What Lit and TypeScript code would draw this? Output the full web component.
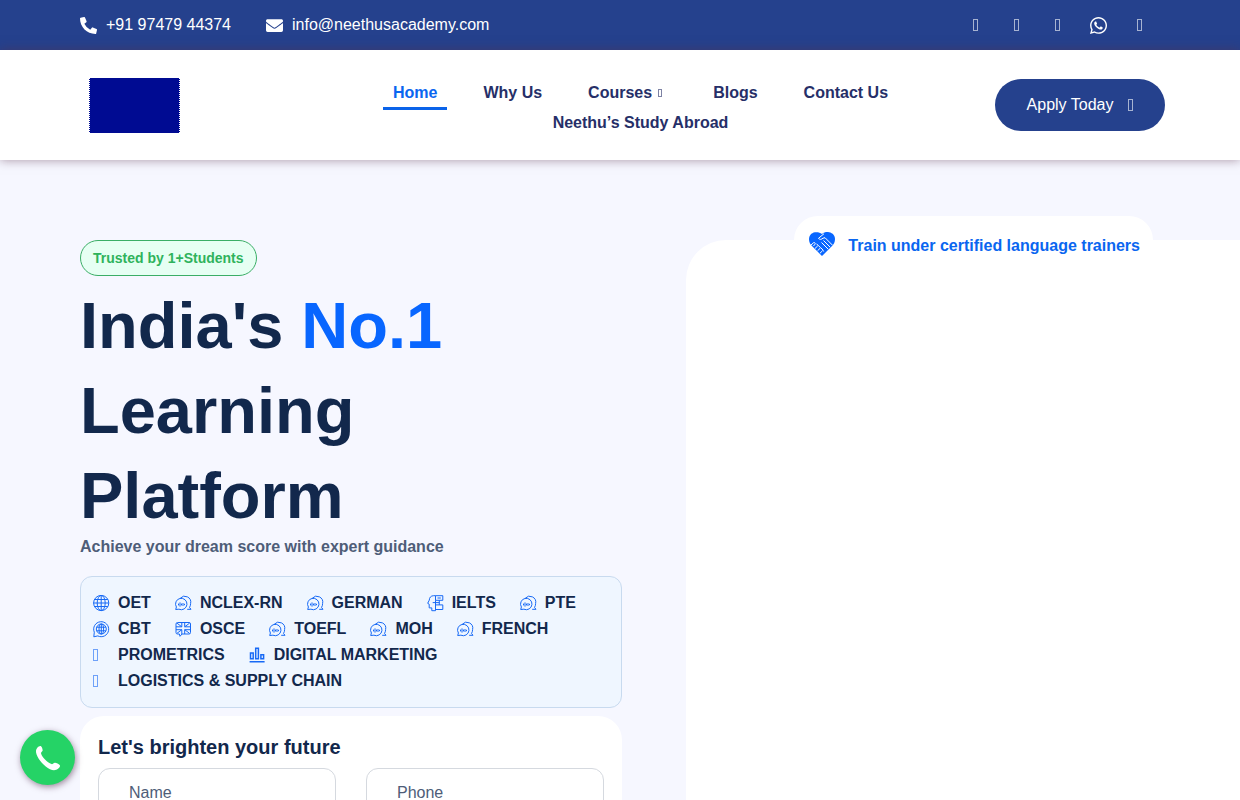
import { LitElement, html, css, svg } from "lit";
import { customElement } from "lit/decorators.js";

const handset = "M497.39 361.8l-112-48a24 24 0 0 0-28 6.9l-49.6 60.6A370.66 370.66 0 0 1 130.6 204.11l60.6-49.6a23.94 23.94 0 0 0 6.9-28l-48-112A24.16 24.16 0 0 0 122.6.61l-104 24A24 24 0 0 0 0 48c0 256.5 207.9 464 464 464a24 24 0 0 0 23.4-18.6l24-104a24.29 24.29 0 0 0-14.01-27.6z";
const envelope = "M502.3 190.8c3.9-3.1 9.7-.2 9.7 4.7V400c0 26.5-21.5 48-48 48H48c-26.5 0-48-21.5-48-48V195.6c0-5 5.7-7.8 9.7-4.7 22.4 17.4 52.1 39.5 154.1 113.6 21.1 15.4 56.7 47.8 92.2 47.6 35.7.3 72-32.8 92.3-47.6 102-74.1 131.6-96.3 154-113.7zM256 320c23.2.4 56.6-29.2 73.4-41.4 132.7-96.3 142.8-104.7 173.4-128.7 5.8-4.5 9.2-11.5 9.2-18.9v-19c0-26.5-21.5-48-48-48H48c-26.5 0-48 21.5-48 48v19c0 7.4 3.4 14.3 9.2 18.9 30.6 23.9 40.7 32.4 173.4 128.7 16.8 12.2 50.2 41.8 73.4 41.4z";
const whatsapp = "M380.9 97.1C339 55.1 283.2 32 223.9 32c-122.4 0-222 99.6-222 222 0 39.1 10.2 77.3 29.6 111L0 480l117.7-30.9c32.4 17.7 68.9 27 106.1 27h.1c122.3 0 224.1-99.6 224.1-222 0-59.3-25.2-115-67.1-157zm-157 341.6c-33.2 0-65.7-8.9-94-25.7l-6.7-4-69.8 18.3L72 359.2l-4.4-7c-18.5-29.4-28.2-63.3-28.2-98.2 0-101.7 82.8-184.5 184.6-184.5 49.3 0 95.6 19.2 130.4 54.1 34.8 34.9 56.2 81.2 56.1 130.5 0 101.8-84.9 184.6-186.6 184.6zm101.2-138.2c-5.5-2.8-32.8-16.2-37.9-18-5.1-1.9-8.8-2.8-12.5 2.8-3.7 5.6-14.3 18-17.6 21.8-3.2 3.7-6.5 4.2-12 1.4-32.6-16.3-54-29.1-75.5-66-5.7-9.8 5.7-9.1 16.3-30.3 1.8-3.7.9-6.9-.5-9.7-1.4-2.8-12.5-30.1-17.1-41.2-4.5-10.8-9.1-9.3-12.5-9.5-3.2-.2-6.9-.2-10.6-.2-3.7 0-9.7 1.4-14.8 6.9-5.1 5.6-19.4 19-19.4 46.3 0 27.3 19.9 53.7 22.6 57.4 2.8 3.7 39.1 59.7 94.8 83.8 35.2 15.2 49 16.5 66.6 13.9 10.7-1.6 32.8-13.4 37.4-26.4 4.6-13 4.6-24.1 3.2-26.4-1.3-2.5-5-3.9-10.5-6.6z";

const globe = svg`<circle cx="8.200" cy="8" r="7.600"/><ellipse cx="8.200" cy="8" rx="4" ry="7.600"/><path d="M8.200.4v15.200M1.600 4.500h13.200M1.600 11.500h13.200M.6 8h15.200"/>`;
const chat = svg`<path d="M5.200 3.300A6 6 0 0 1 15.600 8.500c0 1.600-.4 2.900-1.100 3.900l1.500 1.900h-3.800"/><path d="M.7 14.500l.7-2.500a5.700 5.700 0 1 1 2.500 2.200z"/><path d="M3.500 8.600v1.800M5 7.400v4.200M6.500 8.600v1.800M8 8v3M9.500 8.800v1.400"/>`;
const globeChat = svg`<path d="M.8 15.800l.5-4.600A7.500 7.500 0 1 1 4.800 14.900z"/><circle cx="8.300" cy="8" r="5"/><ellipse cx="8.300" cy="8" rx="2.300" ry="5"/><path d="M8.300 3v10M3.800 6.200h9M3.800 9.800h9"/>`;
const flag = svg`<path d="M2.500 1.500h11.500a1.500 1.500 0 0 1 1.500 1.500v8.500a1.500 1.500 0 0 1-1.500 1.500H7L5 15.300 4.400 13H2.500A1.500 1.500 0 0 1 1 11.500V3a1.500 1.500 0 0 1 1.500-1.500z"/><path d="M6.800 1.500v4.300H1M9.700 1.500v4.300h5.800M6.800 13V8.700H1M9.700 13V8.700h5.800M2 2.200l4.800 3.600M14.500 2.200L9.700 5.800M2 12.300l4.800-3.600M14.500 12.300L9.700 8.700"/>`;
const head = svg`<path d="M8.500.7H6.600C3.800.7 2.300 2.700 2.300 5.100L.7 8.300l1.500.9v3.700h2.600v2.800h3.700"/><path d="M8.500.7h7.300v4.600H8.500zM8.500 9.900h7.300v4.600H8.500zM8.500 5.300v10.400M12.300 5.300v4.600M8.500 7.600h3.800M10.500 3h3.300M5.700 7.600h2.800"/>`;
const bars = svg`<path stroke-width="1.500" d="M1.500 5.900h2.700v5.800H1.500zM6.700 1.200h2.700v10.500H6.700zM11.900 7.700h2.700v4h-2.700zM.6 14.700h15"/>`;

const missing = html`<span class="glyph"></span>`;
const line = (shape: unknown) => html`<svg class="line" viewBox="0 0 17 17" aria-hidden="true">${shape}</svg>`;
const solid = (d: string, box = "0 0 512 512") => html`<svg class="solid" viewBox=${box} aria-hidden="true"><path d=${d} /></svg>`;

const courses: [string, unknown][] = [
  ["OET", line(globe)], ["NCLEX-RN", line(chat)], ["GERMAN", line(chat)], ["IELTS", line(head)], ["PTE", line(chat)],
  ["CBT", line(globeChat)], ["OSCE", line(flag)], ["TOEFL", line(chat)], ["MOH", line(chat)], ["FRENCH", line(chat)],
  ["PROMETRICS", missing], ["DIGITAL MARKETING", line(bars)], ["LOGISTICS & SUPPLY CHAIN", missing],
];

@customElement("app-root")
export class AppRoot extends LitElement {
  static styles = css`
    :host { display: block; min-height: 100vh; font: 16px/24px "Liberation Sans", Arial, sans-serif; color: #12284c; background: #f6f7ff; }
    * { box-sizing: border-box; }
    a { color: inherit; text-decoration: none; }
    svg { display: block; flex: none; }
    .solid { width: 17px; height: 17px; fill: currentColor; }
    .line { width: 17px; height: 17px; fill: none; stroke: #1769f5; stroke-width: 1; }
    .glyph { display: block; width: 5px; height: 12px; border: 1px solid currentColor; opacity: .6; }

    .topbar { display: flex; justify-content: space-between; align-items: center; height: 50px; padding: 0 80px; color: #fff; background: #25418d; }
    .contacts { display: flex; gap: 35px; }
    .contact { display: flex; align-items: center; gap: 9px; }
    .socials { display: flex; }
    .social { display: grid; place-items: center; width: 41px; height: 30px; }

    .header { position: relative; display: grid; grid-template-columns: 236px minmax(0, 1fr) 200px; align-items: start; min-height: 110px; padding: 28px 75px 22px 80px; background: #fff; box-shadow: 0 0 10px rgba(90, 45, 70, .5); }
    .logo { display: block; width: 91px; height: 55px; margin-left: 9px; background: #000b92; border-inline: 1px dotted #fff; }
    .nav { display: flex; flex-wrap: wrap; justify-content: center; column-gap: 26px; font-weight: 700; color: #262f68; }
    .nav a { display: flex; align-items: center; height: 30px; padding: 0 10px; }
    .nav .current { height: 32px; margin-bottom: -2px; padding-top: 1px; border-bottom: 3px solid #0a63e9; color: #0a66f0; }
    .nav .glyph { width: 4px; height: 8px; margin: 0 5px 0 6px; }
    .apply { justify-self: end; display: flex; align-items: center; justify-content: center; gap: 15px; width: 170px; height: 52px; margin-top: 1px; border: 0; border-radius: 26px; font: inherit; color: #fff; background: #25418d; }

    .hero { display: grid; grid-template-columns: minmax(0, 542fr) minmax(0, 554fr); column-gap: 64px; padding: 80px 0 0 80px; }
    .intro { padding-bottom: 40px; }
    .badge { display: inline-flex; align-items: center; height: 36px; padding: 0 12px; border: 1px solid #3aae66; border-radius: 18px; font-size: 14px; font-weight: 700; color: #2fb35c; background: #e6fff3; vertical-align: top; }
    .title { margin: 7px 0 0; font-size: 65px; line-height: 85px; }
    .title .accent { color: #0866ff; }
    .lead { margin: 0 0 20px; line-height: 18px; font-weight: 700; color: #4e5d78; }
    .courses { display: flex; flex-wrap: wrap; column-gap: 24px; margin: 0; padding: 13px 12px; list-style: none; border: 1px solid #c8daef; border-radius: 12px; background: #eff6ff; }
    .course { display: grid; grid-template-columns: 17px auto; align-items: center; column-gap: 8px; height: 26px; font-weight: 700; }
    .course .glyph { color: #1769f5; }
    .form { margin-top: 8px; padding: 18px; border-radius: 24px; background: #fff; }
    .form-title { margin: 0 0 8px; font-size: 20px; line-height: 26px; }
    .fields { display: grid; grid-template-columns: 1fr 1fr; gap: 30px; }
    .field { width: 100%; height: 50px; padding: 0 30px; border: 1px solid #d5d9df; border-radius: 12px; font: inherit; color: #12284c; background: #fff; }
    .field::placeholder { color: #4e5d78; opacity: 1; }

    .stage { position: relative; border-radius: 40px 0 0 0; background: #fff; }
    .note { position: absolute; top: -24px; right: 87px; display: flex; align-items: center; gap: 13px; height: 60px; padding: 0 13px 0 15px; border-radius: 24px; font-weight: 700; white-space: nowrap; color: #0a66f0; background: #fff; }
    .heart { width: 26px; height: 24px; margin-bottom: 4px; }
    .call { position: fixed; left: 20px; bottom: 15px; display: grid; place-items: center; width: 55px; height: 55px; border-radius: 50%; background: #25d366; box-shadow: 1px 2px 6px rgba(70, 30, 60, .5); }
    .call svg { width: 28px; height: 28px; fill: #fff; }
  `;

  render() {
    return html`
      <div class="topbar">
        <div class="contacts">
          <a class="contact" href="tel:+919747944374">${solid(handset)}<span>+91 97479 44374</span></a>
          <a class="contact" href="mailto:info@neethusacademy.com">${solid(envelope)}<span>info@neethusacademy.com</span></a>
        </div>
        <div class="socials">
          <a class="social" href="#" aria-label="Facebook">${missing}</a>
          <a class="social" href="#" aria-label="Instagram">${missing}</a>
          <a class="social" href="#" aria-label="YouTube">${missing}</a>
          <a class="social" href="#" aria-label="WhatsApp">${solid(whatsapp, "0 32 448 448")}</a>
          <a class="social" href="#" aria-label="LinkedIn">${missing}</a>
        </div>
      </div>
      <header class="header">
        <a class="logo" href="#" aria-label="Neethu's Academy"></a>
        <nav class="nav">
          <a class="current" href="#">Home</a>
          <a href="#">Why Us</a>
          <a href="#">Courses${missing}</a>
          <a href="#">Blogs</a>
          <a href="#">Contact Us</a>
          <a href="#">Neethu’s Study Abroad</a>
        </nav>
        <button class="apply" type="button">Apply Today${missing}</button>
      </header>
      <main class="hero">
        <section class="intro">
          <span class="badge">Trusted by 1+Students</span>
          <h1 class="title">India's <span class="accent">No.1</span> Learning Platform</h1>
          <p class="lead">Achieve your dream score with expert guidance</p>
          <ul class="courses">
            ${courses.map(([name, icon]) => html`<li class="course">${icon}<span>${name}</span></li>`)}
          </ul>
          <form class="form">
            <h2 class="form-title">Let's brighten your future</h2>
            <div class="fields">
              <input class="field" type="text" aria-label="Name" placeholder="Name" />
              <input class="field" type="tel" aria-label="Phone" placeholder="Phone" />
            </div>
          </form>
        </section>
        <section class="stage">
          <div class="note">
            <svg class="heart" viewBox="0 0 26 24" aria-hidden="true">
              <path fill="#0866ff" d="M13 2C15 0 18-.1 20 .2c4 .6 6 3.700 6 7 0 3-1.300 5-3.200 7L13 24 3.200 14.300C1.300 12.300 0 10.300 0 7.300 0 4 2 .9 6 .3c2-.3 5-.1 7 1.700z"/>
              <path fill="none" stroke="#fff" stroke-width="1" d="M15 1.700 9.500 6.300c.8 1.500 3 1.400 4.500-.1l2-.5 7.500 7.500M14.500 8.500l6.700 6.700M12.500 10.500l6.700 6.700M2 13l2.600-2.300c1.200-.5 2 .5 1.400 1.500L4.500 14M6 16.500l2.800-2.700M8.500 18.800l2.600-2.500M11 21.200l2.400-2.300M7.500 12l2 1.500 1.700 2 2 1.500 1.500 2.500"/>
            </svg>
            <span>Train under certified language trainers</span>
          </div>
        </section>
      </main>
      <a class="call" href="tel:+919747944374" aria-label="Call now">
        <svg viewBox="0 0 28 28" aria-hidden="true"><path d="M3.300 3.700C4.500 2.400 6 1.600 7 2.200c1 .7 1.500 2.700 1.700 4 .1 1.200-1.900 2-1.700 3 .6 2.300 2 4.300 4 6.300s4.300 3.800 6.500 4.600c1.200.4 2.200-1.600 3.500-1.400 1.400.2 3.800 1.200 4.700 2.200.9 1.100-.1 2.600-1.400 3.700-2.300 2-5.300 2-8.300.6-3-1.500-5.700-3.700-8-6.300-2.300-2.500-4.300-5.400-5.400-8.500-.9-2.500-.9-4.900.7-6.700z"/></svg>
      </a>
    `;
  }
}
